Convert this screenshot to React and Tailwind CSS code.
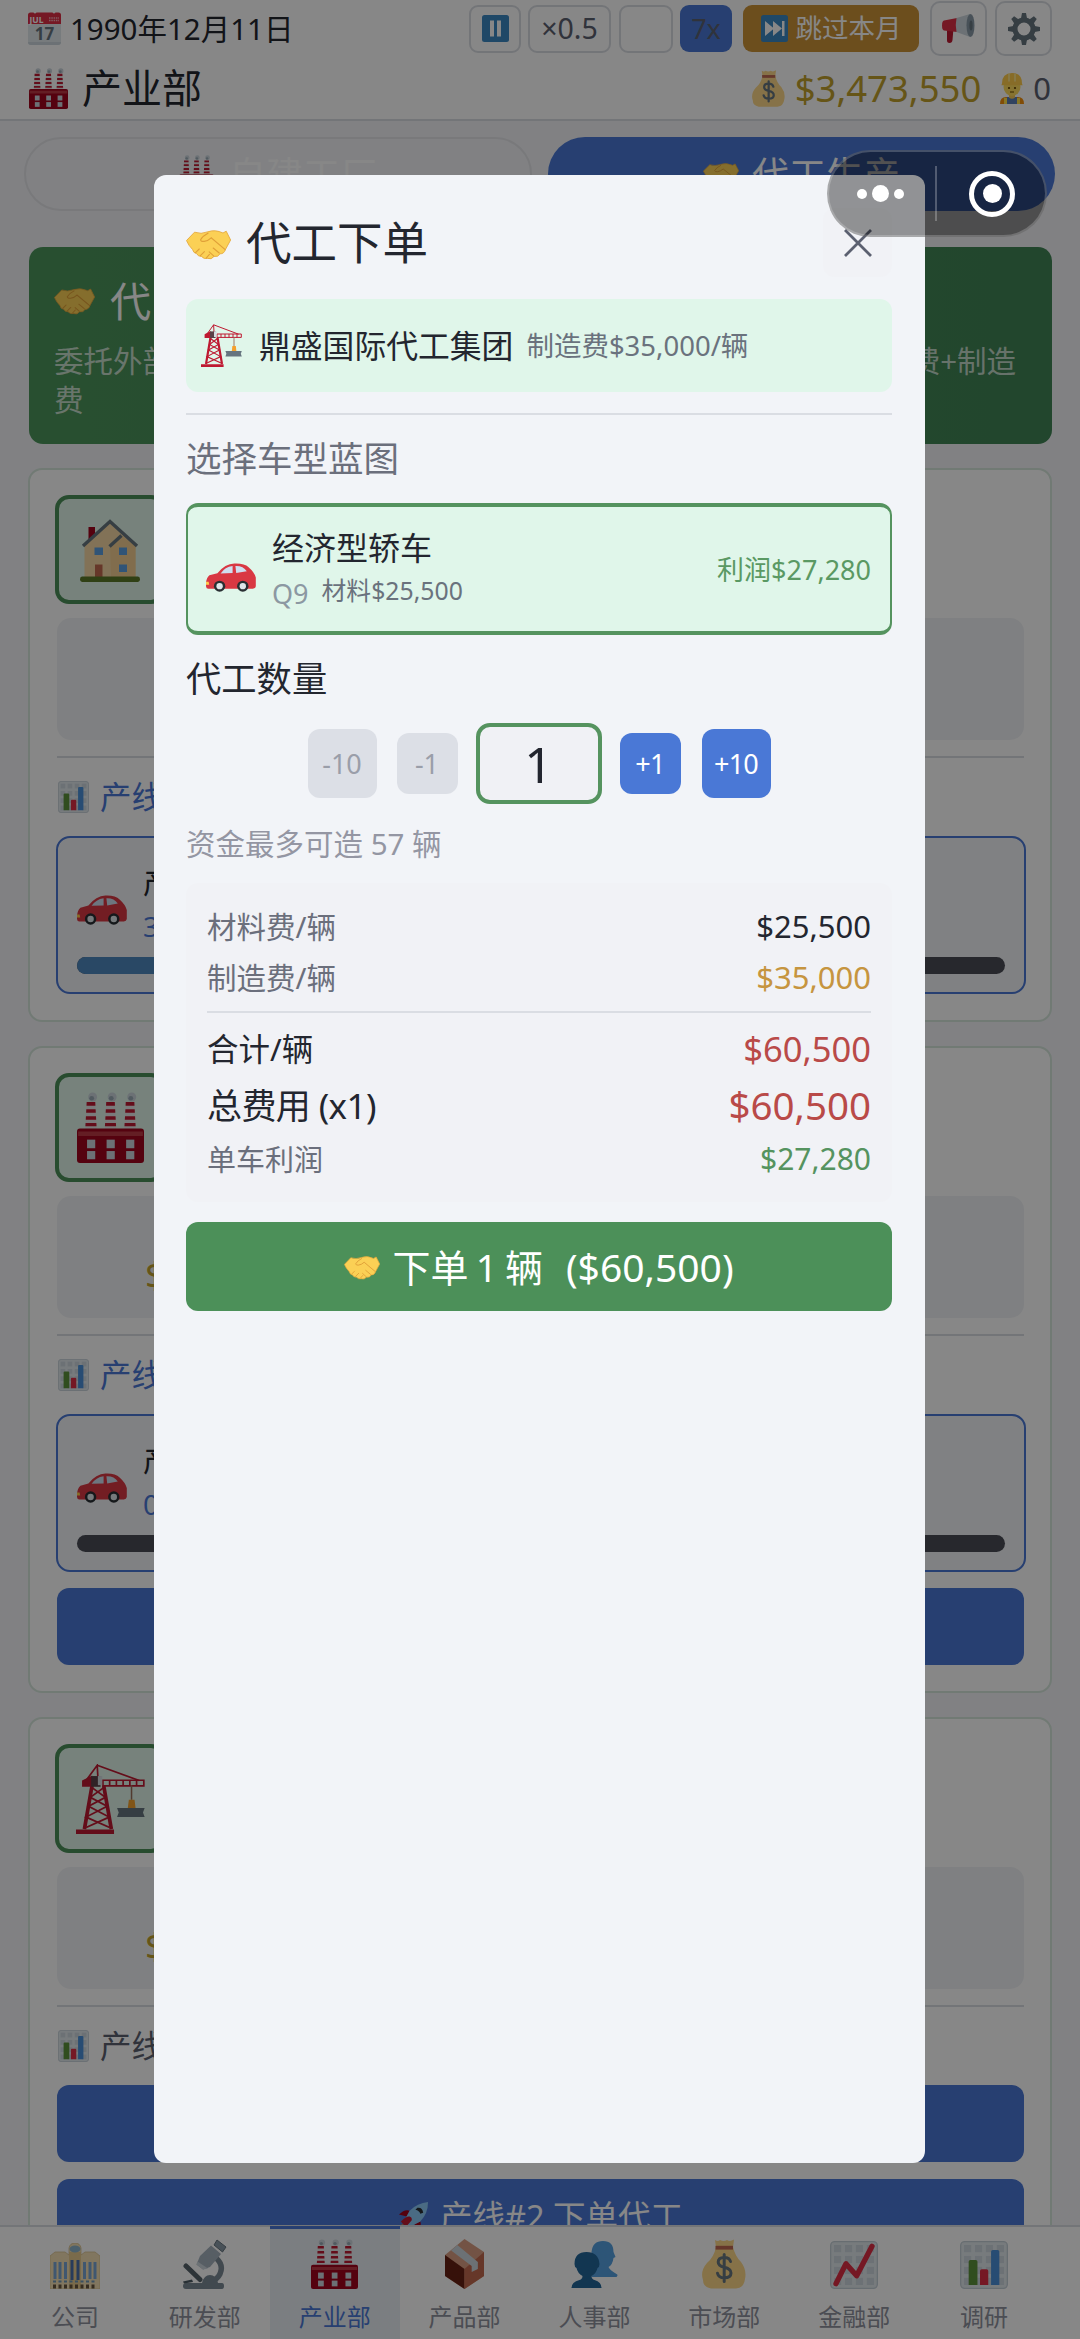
import React from "react";

/* ---------- emoji-style artwork ---------- */

function Factory({ className }) {
  return (
    <svg viewBox="0 0 36 38" preserveAspectRatio="none" className={className}>
      {[7.5, 18, 28.5].map((x) => (
        <g key={x}>
          <ellipse cx={x + 0.9} cy="2.7" rx="2.4" ry="2.4" fill="#ccd6dd" />
          <ellipse cx={x + 0.4} cy="3.4" rx="1.3" ry="1.2" fill="#99aab5" />
          <path d={`M${x - 2.3} 5.4h4.6l.8 14.6h-6.2z`} fill="#e6e7e8" />
          <path d={`M${x - 2.3} 5.4h4.6l.1 1.9h-4.8zM${x - 2.5} 9.2h5l.1 1.9h-5.2zM${x - 2.7} 13h5.4l.1 1.9h-5.6zM${x - 2.9} 16.6h5.8l.1 1.7h-6z`} fill="#be1931" />
        </g>
      ))}
      <rect x="0" y="19.5" width="36" height="18.5" rx="1.6" fill="#a0041e" />
      <path d="M.6 21.2h34.8v2.4H.6z" fill="#be3a45" />
      {[5.4, 15.9, 26.4].map((x) => (
        <g key={x} fill="#ccd6dd">
          <rect x={x} y="25.5" width="4.4" height="4.6" />
          <rect x={x} y="31.6" width="4.4" height="4.4" />
        </g>
      ))}
    </svg>
  );
}

function Handshake({ className }) {
  return (
    <svg viewBox="0 0 45 30" preserveAspectRatio="none" className={className}>
      <path d="M.5 10.5 8.5 2.2Q15 4.6 22 1.8 29-.8 37 3l3.2-1.8L44.6 10l-5.2 9.6Q38 24 34 23.8 32 27.4 28 26.4 25.5 30 21.6 28.4 18 29.4 15.4 26.4 12 26.6 10.6 23.6 7.4 23.2 6.6 19.6 2.6 15.6.5 10.5z" fill="#fbd055" stroke="#e5a93c" strokeWidth=".9" strokeLinejoin="round" />
      <path d="M22 3.2Q16.8 5.8 14.6 9.8q.2 2 3.6 1.6 4.2-.8 7-3.6L39.2 19.6" fill="none" stroke="#e0a038" strokeWidth="1.2" strokeLinecap="round" />
      <path d="M9.6 22.6l3.6-3.6M14.4 25.6l4-4M20.4 27.8l3-3.4M27.6 25.8l-4.4-4M33.2 23l-6-5" fill="none" stroke="#e0a038" strokeWidth="1.1" strokeLinecap="round" />
    </svg>
  );
}

function Crane({ className }) {
  return (
    <svg viewBox="0 0 41 43" preserveAspectRatio="none" className={className}>
      <g fill="none" stroke="#be1931">
        <path d="M9.5 13.5 5 40M16.5 13.5 21 40" strokeWidth="2.2" />
        <path d="M9.5 14.5l8 6-10 5.5 12.2 6.6L6 39M16.5 14.5l-8 6 10 5.5L6 32.6 20 39" strokeWidth="1.1" />
        <path d="M5 11.5 12.6.8 13 8M12.6.8l25 9.4" strokeWidth="1" />
        <path d="M16 10h24.3v3.4H16zM20 10v3.4M24 10v3.4M28 10v3.4M32 10v3.4M36 10v3.4" strokeWidth="1" />
      </g>
      <path d="M0 40.2h22.6V43H0zM3.6 10.2 9.6 7v7H3.6z" fill="#be1931" />
      <path d="M9 7.4h5.6V14H9z" fill="#5b4148" />
      <path d="M13 7.4h2.6V13H13z" fill="#d5dde2" />
      <path d="M33 13v9" stroke="#99705a" strokeWidth=".9" />
      <path d="M31.4 22h3.4l.6 5h-4.6z" fill="#f4a02c" />
      <path d="M24.4 27h16.4l-1 2.8 1 2.8H24.4l1-2.8z" fill="#66757f" />
    </svg>
  );
}

function Car({ className }) {
  return (
    <svg viewBox="0 0 50 30" preserveAspectRatio="none" className={className}>
      <path d="M0 24q-.4-8 3.4-11.2l8-2.2Q19 1 28.4.6q10-.4 14.2 3.8Q48.600 9.800 49.800 15v9q-.4 2.400-3 2.600H2.400Q.2 26.600 0 24z" fill="#d93843" />
      <path d="M14.600 10.800q4.400-6.600 12-7.600v7.200zM29.400 3.200q7.600-.4 11.400 5.400l-10.600 1.800z" fill="#cfdff0" />
      <path d="M0 19.500h2.600l.6 3H0z" fill="#ffcc4d" />
      {[13.6, 36.8].map((x) => (
        <g key={x}>
          <circle cx={x} cy="24" r="5.700" fill="#292f33" />
          <circle cx={x} cy="24" r="3.200" fill="#dfe6ea" />
        </g>
      ))}
    </svg>
  );
}

function House({ className }) {
  return (
    <svg viewBox="0 0 60 64" preserveAspectRatio="none" className={className}>
      <path d="M8.500 9h6.500v12H8.500z" fill="#a0041e" />
      <path d="M4.500 27 30 4l25.500 23v33h-51z" fill="#f5d8a4" />
      <path d="M30 28 42 18l13.500 10v32H31z" fill="#f3cf92" />
      <path d="M3 28 30 3.500 57 28M29.500 28.500 41.500 17.500" fill="none" stroke="#66757f" strokeWidth="3.400" />
      <path d="M15 46.500h7.500V60H15z" fill="#c1694f" />
      <path d="M14.500 29.500H23V37h-8.500zM39 29.500h8V37h-8zM39 46.500h8V54h-8z" fill="#5c9fe0" />
      <path d="M2 58.500h56q2 0 2 2.700t-2 2.700H2q-2 0-2-2.700t2-2.700z" fill="#5c7a28" />
    </svg>
  );
}

function ChartFrame() {
  return (
    <>
      <rect x=".5" y=".5" width="35" height="35" rx="3" fill="#e1e8ed" stroke="#c3ced6" />
      {[3, 11.2, 19.400, 27.600].map((y) =>
        [3, 11.200, 19.400, 27.600].map((x) => (
          <rect key={`${x}-${y}`} x={x} y={y} width="5.400" height="5.400" fill="#ccd6dd" />
        ))
      )}
    </>
  );
}

function BarChart({ className }) {
  return (
    <svg viewBox="0 0 36 36" preserveAspectRatio="none" className={className}>
      <ChartFrame />
      <path d="M6.500 15.500q0-1.300 1.300-1.300h4q1.300 0 1.300 1.300V33H6.500z" fill="#5c913b" />
      <path d="M15 22.500q0-1.300 1.300-1.300h3.600q1.300 0 1.300 1.300V33H15z" fill="#dd2e44" />
      <path d="M23.300 8q0-1.300 1.300-1.300h3.600Q29.500 6.700 29.500 8v25h-6.200z" fill="#4a90d9" />
    </svg>
  );
}

function LineChart({ className }) {
  return (
    <svg viewBox="0 0 36 36" preserveAspectRatio="none" className={className}>
      <ChartFrame />
      <path d="M4.500 32 12 17l8 9L31.500 4" fill="none" stroke="#dd2e44" strokeWidth="4" strokeLinecap="round" strokeLinejoin="round" />
    </svg>
  );
}

function MoneyBag({ className }) {
  return (
    <svg viewBox="0 0 44 50" preserveAspectRatio="none" className={className}>
      <path d="M13 1q3 2 5 0 4 2 7 0 3 2 7-.5L31 8.500H14z" fill="#fdd888" />
      <path d="M14 8h17q2 9 8 15 6 8 4 17 -1 9-9 9.500H9Q1 48 1 41-2 32 5 24q7-6 9-16z" fill="#fdd888" />
      <path d="M13.500 6.800h17.500v3.800H13.500z" fill="#bf6952" />
      <path d="M28.500 22.500q-1-4-6.300-4-6 0-6 4.500 0 4 6 5.300 6.800 1.500 6.800 5.700 0 4.800-6.800 4.800-5.700 0-6.700-4.600M22.200 15.500v27" fill="none" stroke="#67757f" strokeWidth="3" strokeLinecap="round" />
    </svg>
  );
}

function Calendar({ className }) {
  return (
    <svg viewBox="0 0 33 33" className={className}>
      <rect x="0" y="8" width="33" height="25" rx="3" fill="#e1e8ed" />
      <path d="M0 30h33q0 3-3 3H3q-3 0-3-3z" fill="#ccd6dd" />
      <path d="M0 3q0-2.500 2.500-2.500h3q1.500 2 3 0h16q1.500 2 3 0h3Q33 .5 33 3v9H0z" fill="#dd2e44" />
      <text x="1.500" y="10.500" fontFamily="Noto Sans, sans-serif" fontWeight="700" fontSize="8.500" fill="#fff">JUL</text>
      <path d="M21 6h10M21 8.500h10" stroke="#f4abb6" strokeWidth="1.300" strokeDasharray="1.500 .8" />
      <text x="16.500" y="28" textAnchor="middle" fontFamily="Noto Sans, sans-serif" fontWeight="700" fontSize="17" fill="#66757f">17</text>
    </svg>
  );
}

function Worker({ className }) {
  return (
    <svg viewBox="0 0 24 31" preserveAspectRatio="none" className={className}>
      <path d="M0 31q0-7 6-7h12q6 0 6 7z" fill="#f4900c" />
      <path d="M7 24h10v7H7z" fill="#5b7fb5" />
      <path d="M4 25h3v6H4zM17 25h3v6h-3z" fill="#ffe04a" />
      <path d="M9 20h6v4.500q-3 2.500-6 0z" fill="#f9ca55" />
      <ellipse cx="12" cy="14" rx="8.500" ry="9" fill="#ffdc5d" />
      <path d="M2 10.500Q2 0 12 0t10 10.500l.6 1.800H1.400z" fill="#ffcc4d" />
      <path d="M9 .6v8M15 .6v8" stroke="#fff0a8" strokeWidth="1.200" />
      <circle cx="9" cy="15" r="1.100" fill="#664500" />
      <circle cx="15" cy="15" r="1.100" fill="#664500" />
      <path d="M10 19h4" stroke="#664500" strokeWidth="1" />
    </svg>
  );
}

function Megaphone({ className }) {
  return (
    <svg viewBox="0 0 33 29" className={className}>
      <path d="M5 14h6.500l-1 12q-.3 3-3 3T5 26z" fill="#be1931" />
      <path d="M2 6.500 15 4v14L2 16.500Q0 16 0 11.500t2-5z" fill="#dd2e44" />
      <path d="M14.500 4 28 0q4 10 0 23l-13.500-5q-1.500-7 0-14z" fill="#ccd6dd" />
      <ellipse cx="28.500" cy="11.500" rx="4" ry="11.500" fill="#8899a6" />
      <ellipse cx="29" cy="11.500" rx="1.600" ry="5" fill="#66757f" />
    </svg>
  );
}

function Gear({ className }) {
  return (
    <svg viewBox="-16 -16 32 32" className={className}>
      <circle r="9" fill="none" stroke="#66757f" strokeWidth="5" />
      {[0, 45, 90, 135, 180, 225, 270, 315].map((a) => (
        <path key={a} d="M-3-10.500-2-16h4l1 5.500z" fill="#66757f" transform={`rotate(${a})`} />
      ))}
    </svg>
  );
}

function Office({ className }) {
  return (
    <svg viewBox="0 0 50 46" preserveAspectRatio="none" className={className}>
      <path d="M0 13 5 9h10l4 3V5q1-5 6-5t6 5v7l4-3h10l5 4v33H0z" fill="#f3dfb4" stroke="#d9c08d" strokeWidth=".8" />
      <path d="M19 9h12v37H19z" fill="#e6cb8e" />
      <ellipse cx="25" cy="6" rx="5.500" ry="3.500" fill="#8fb5cc" />
      <path d="M5 19v17M10 19v17M15.500 19v17M34.500 19v17M40 19v17M45 19v17" stroke="#7aa5d4" strokeWidth="3" />
      <path d="M22 17v20M28 17v20" stroke="#4a70ad" strokeWidth="3" />
      <path d="M3 43.500h44" stroke="#66563f" strokeWidth="4" strokeDasharray="3 2.500" />
      <path d="M3 38.500h44" stroke="#6f97b8" strokeWidth="1.800" strokeDasharray="3 2.500" />
    </svg>
  );
}

function Microscope({ className }) {
  return (
    <svg viewBox="0 0 44 50" className={className}>
      <path d="M33 19q8 7 4 16-3 6-10 8" fill="none" stroke="#7b8a95" strokeWidth="5.500" />
      <path d="M3 44h16q2-8 8-8t8 8h4q2 0 2 3t-2 3H3q-3 0-3-3t3-3z" fill="#7b8a95" />
      <path d="M0 42.500 9 40.500l1 2.500-9 1.500z" fill="#4d5b64" />
      <path d="M3 27 17 40.500" stroke="#56626b" strokeWidth="5" strokeLinecap="round" />
      <path d="M17 17 28 6.500 38 15 27 28 20 30.500 13.500 25.500z" fill="#a5b1bd" />
      <path d="M14.500 22.500 25 29.500 20 30.500 13.500 25.500z" fill="#ccd6dd" />
      <path d="M31 6 34 1l9 7-3.500 5z" fill="#8899a6" stroke="#66757f" />
    </svg>
  );
}

function Box({ className }) {
  return (
    <svg viewBox="0 0 38 50" preserveAspectRatio="none" className={className}>
      <path d="M19 0 38 13v24L19 50 0 37V16z" fill="#d99e82" />
      <path d="M0 16 19 30v20L0 37z" fill="#662113" />
      <path d="M19 30 38 13v24L19 50z" fill="#c1694f" />
      <path d="M6 11.500 12 6l20 17v7l-6 3v-6z" fill="#ccd6dd" />
    </svg>
  );
}

function People({ className }) {
  return (
    <svg viewBox="0 0 46 48" className={className}>
      <path d="M20 36V26q3-2 4-4-4-5-4-11Q21 0 31.500 0T42 11l2 5-2 1q-1 7-5 9 1 3 8 7 2 1 0 3z" fill="#55a0e0" />
      <path d="M0 47q0-6 8-8 3-1 3-4-5-3-6-8-2-1-2-4Q3 11 15 11t13 12q0 3-2 4-1 5-6 8 0 3 3 4 7 2 7 8z" fill="#226699" />
    </svg>
  );
}

function Rocket({ className }) {
  return (
    <svg viewBox="0 0 32 32" className={className}>
      <path d="M1 13q6-6 11-4l-3 6zM19 31q6-6 4-11l-6 3z" fill="#a0041e" />
      <path d="M0 32q0-8 5-9l4 4q-1 5-9 5z" fill="#f4900c" />
      <path d="M31 0Q20 1 12 9L6 20l6 6 11-6Q31 12 31 0z" fill="#8ccaf7" />
      <path d="M20 6q5-1 6 5l-3 1q-1-3-5-4z" fill="#292f33" />
      <path d="M3 20q6-6 9-5t2 4l-6 7z" fill="#be1931" />
    </svg>
  );
}

/* ---------- page behind the dialog ---------- */

function Header() {
  return (
    <header className="h-[121px] shrink-0 border-b-2 border-[#dadde3] bg-white">
      <div className="flex h-[57px] items-center pr-[28px] pl-[28px]">
        <Calendar className="h-[33px] w-[33px]" />
        <span className="ml-[9px] text-[29.500px] leading-none text-[#23262f]">1990年12月11日</span>
        <div className="ml-auto flex items-center text-[27px] leading-none">
          <span className="flex h-[48px] w-[52px] items-center justify-center rounded-[9px] border-2 border-[#dadde3]">
            <svg viewBox="0 0 27 27" className="h-[27px] w-[27px]">
              <rect width="27" height="27" rx="2.500" fill="#3b88c3" />
              <path d="M8 5.500h4v16H8zM15 5.500h4v16h-4z" fill="#fff" />
            </svg>
          </span>
          <span className="ml-[7px] flex h-[48px] w-[83px] items-center justify-center rounded-[9px] border-2 border-[#dadde3] text-[28.500px] text-[#5b6070]">×0.5</span>
          <span className="ml-[8px] h-[48px] w-[54px] rounded-[9px] border-2 border-[#dadde3]" />
          <span className="ml-[7px] flex h-[47px] w-[52px] items-center justify-center rounded-[9px] bg-[#4a78d6] text-[#5b6070]">7x</span>
          <span className="ml-[11px] flex h-[47px] w-[176px] items-center justify-center gap-[8px] rounded-[9px] bg-[#cc9338] text-[26.500px] whitespace-nowrap text-white">
            <svg viewBox="0 0 27 27" className="h-[27px] w-[27px]">
              <rect width="27" height="27" rx="2.500" fill="#3b88c3" />
              <path d="M4 6l9 7.500L4 21zM12 6l9 7.500L12 21zM21 6h2.500v15H21z" fill="#fff" />
            </svg>
            跳过本月
          </span>
          <span className="ml-[11px] flex h-[55px] w-[57px] items-center justify-center rounded-[10px] border-2 border-[#dadde3]">
            <Megaphone className="h-[29px] w-[33px]" />
          </span>
          <span className="ml-[8px] flex h-[55px] w-[57px] items-center justify-center rounded-[10px] border-2 border-[#dadde3]">
            <Gear className="h-[32px] w-[32px]" />
          </span>
        </div>
      </div>
      <div className="flex h-[62px] items-center pr-[29px] pl-[29px] leading-none">
        <Factory className="h-[41px] w-[39px]" />
        <span className="ml-[14px] text-[40px] text-[#23262f]">产业部</span>
        <MoneyBag className="ml-auto h-[37px] w-[33px]" />
        <span className="ml-[10px] text-[36.500px] text-[#c0a02c]">$3,473,550</span>
        <Worker className="ml-[19px] h-[31px] w-[24px]" />
        <span className="ml-[9px] text-[31px] text-[#5b6070]">0</span>
      </div>
    </header>
  );
}

function LineBox({ digit, filled }) {
  return (
    <div className="-mr-[2px] -ml-[1px] h-[158px] rounded-[14px] border-2 border-[#4a78d6] bg-[#f2f4f8] px-[19px]">
      <div className="flex h-[119px] items-start">
        <Car className="mt-[57px] h-[30px] w-[50px]" />
        <div className="ml-[16px] leading-none">
          <div className="mt-[22px] flex h-[44px] items-center text-[30px] text-[#23262f]">产</div>
          <div className="flex h-[44px] items-center text-[28px] text-[#4a78d6]">{digit}</div>
        </div>
      </div>
      <div className="h-[17px] overflow-hidden rounded-full bg-[#4a4c55]">
        {filled && <div className="h-full w-1/2 bg-[#4f88bf]" />}
      </div>
    </div>
  );
}

function PlantCard({ icon, price, muted, children }) {
  return (
    <section className="shrink-0 rounded-[14px] border-2 border-[#d6e6dc] bg-white pt-[25px] pr-[26px] pb-[26px] pl-[27px]">
      <div className="-ml-[2px] flex h-[109px] w-[110px] items-center justify-center rounded-[14px] border-4 border-[#4c9059] bg-[#e0f6ea]">
        {icon}
      </div>
      <div className="mt-[14px] flex h-[122px] items-center rounded-[14px] bg-[#f0f2f5] pl-[88px]">
        <span className="mt-[36px] text-[36px] leading-none text-[#c0a02c]">{price}</span>
      </div>
      <div className="mt-[16px] h-[2px] bg-[#dadde3]" />
      <div className="flex h-[78px] items-center">
        <BarChart className="ml-px h-[32px] w-[31px]" />
        <span className={muted ? "ml-[11px] text-[31.500px] leading-none text-[#5b6070]" : "ml-[11px] text-[31.500px] leading-none text-[#4a78d6]"}>产线</span>
      </div>
      {children}
    </section>
  );
}

function Background() {
  return (
    <main className="flex-1 overflow-hidden px-[28px] pt-[16px]">
      <div className="-mx-[4px] flex h-[74px] gap-[16px] pr-px text-[37px] leading-none">
        <div className="flex w-[508px] items-center justify-center gap-[15px] rounded-full border-2 border-[#e4e5e9]">
          <Factory className="h-[38px] w-[35px]" />
          <span className="text-white">自建工厂</span>
        </div>
        <div className="flex flex-1 items-center justify-center gap-[13px] rounded-full bg-[#4a78d6]">
          <Handshake className="h-[23px] w-[36px]" />
          <span className="text-white">代工生产</span>
        </div>
      </div>

      <div className="mt-[36px] ml-px h-[197px] rounded-[14px] bg-linear-to-r from-[#4d965c] to-[#408455] pt-[29px] pr-[36px] pl-[25px] text-[29.500px] leading-none text-white/70">
        <div className="flex h-[50px] items-center gap-[15px] text-[41px] text-white">
          <Handshake className="h-[27px] w-[41px]" />
          代
        </div>
        <div className="mt-[15px] flex h-[39px] items-center justify-between">
          <span>委托外部</span>
          <span>费+制造</span>
        </div>
        <div className="flex h-[39px] items-center">费</div>
      </div>

      <div className="mt-[24px] flex flex-col gap-[24px]">
        <PlantCard icon={<House className="h-[64px] w-[60px]" />}>
          <LineBox digit="3" filled />
        </PlantCard>
        <PlantCard icon={<Factory className="h-[71px] w-[67px]" />} price="$">
          <LineBox digit="0" />
          <div className="mt-[16px] h-[77px] rounded-[12px] bg-[#4a78d6]" />
        </PlantCard>
        <PlantCard icon={<Crane className="h-[70px] w-[69px]" />} price="$" muted>
          <div className="h-[77px] rounded-[12px] bg-[#4a78d6]" />
          <div className="mt-[17px] flex h-[77px] items-center justify-center gap-[11px] rounded-[12px] bg-[#4a78d6] text-[32.500px] leading-none text-white">
            <Rocket className="h-[31px] w-[31px]" />
            产线#2 下单代工
          </div>
        </PlantCard>
      </div>
    </main>
  );
}

const NAV = [
  ["公司", <Office className="h-[46px] w-[50px]" />],
  ["研发部", <Microscope className="h-[50px] w-[44px]" />],
  ["产业部", <Factory className="h-[50px] w-[47px]" />],
  ["产品部", <Box className="h-[50px] w-[39px]" />],
  ["人事部", <People className="h-[48px] w-[47px]" />],
  ["市场部", <MoneyBag className="h-[50px] w-[44px]" />],
  ["金融部", <LineChart className="h-[48px] w-[48px]" />],
  ["调研", <BarChart className="h-[48px] w-[48px]" />],
];

function BottomNav() {
  return (
    <nav className="flex h-[114px] shrink-0 border-t-2 border-[#dadde3] bg-white pr-[31px] pl-[10px] text-[24px] leading-none">
      {NAV.map(([label, icon]) => {
        const active = label === "产业部";
        return (
          <div
            key={label}
            className={
              active
                ? "-mt-px flex flex-1 flex-col items-center border-t-[3px] border-[#4a78d6] bg-[#e8eef3] pt-[10px] text-[#4a78d6]"
                : "flex flex-1 flex-col items-center pt-[12px] text-[#8f919d]"
            }
          >
            <div className="flex h-[50px] items-end">{icon}</div>
            <span className="mt-[16px]">{label}</span>
          </div>
        );
      })}
    </nav>
  );
}

/* ---------- order dialog ---------- */

function PriceRow({ label, value, rowClass, valueClass }) {
  return (
    <div className={"flex items-center justify-between " + rowClass}>
      <span>{label}</span>
      <span className={valueClass}>{value}</span>
    </div>
  );
}

function OrderDialog() {
  return (
    <div className="h-[1988px] w-[771px] rounded-[12px] bg-[#f2f4f8] pt-[33px] pr-[33px] pl-[32px] leading-none text-[#23262f]">
      <div className="flex h-[69px] items-center">
        <Handshake className="mt-[4px] h-[30px] w-[45px]" />
        <h1 className="ml-[15px] text-[45.500px]">代工下单</h1>
        <button className="ml-auto flex h-[69px] w-[69px] items-center justify-center rounded-[12px] bg-[#f1f2f6]">
          <svg viewBox="0 0 28 28" className="h-[28px] w-[28px]">
            <path d="M1 1l26 26M27 1 1 27" stroke="#5b6070" strokeWidth="2.800" />
          </svg>
        </button>
      </div>

      <div className="mt-[22px] flex h-[93px] items-center rounded-[12px] bg-[#e0f6ea] pl-[15px]">
        <Crane className="h-[43px] w-[41px]" />
        <span className="ml-[17px] text-[31.800px]">鼎盛国际代工集团</span>
        <span className="ml-[13px] text-[27.500px] text-[#6a727d]">制造费$35,000/辆</span>
      </div>
      <div className="mt-[21px] h-[2px] bg-[#dadde3]" />

      <div className="flex h-[88px] items-center text-[35.500px] text-[#6b6f7c]">选择车型蓝图</div>
      <div className="flex h-[132px] items-center rounded-[12px] border-x-2 border-y-4 border-[#55935f] bg-[#e0f6ea] pr-[19px] pl-[18px]">
        <Car className="mt-[17px] h-[29px] w-[50px]" />
        <div className="ml-[16px]">
          <div className="text-[32px]">经济型轿车</div>
          <div className="mt-[11px] flex items-center text-[24.800px] text-[#6a727d]">
            <span className="mt-[5px] text-[27px] text-[#8c98a2]">Q9</span>
            <span className="ml-[13px]">材料$25,500</span>
          </div>
        </div>
        <span className="ml-auto text-[27px] text-[#5a9963]">利润$27,280</span>
      </div>

      <div className="flex h-[88px] items-center text-[35.300px]">代工数量</div>
      <div className="flex h-[81px] items-center justify-center text-[27px] text-white">
        <button className="h-[69px] w-[69px] rounded-[12px] bg-[#dcdfe6] text-[#9a9ea9]">-10</button>
        <button className="ml-[20px] h-[61px] w-[61px] rounded-[12px] bg-[#dcdfe6] text-[#9a9ea9]">-1</button>
        <div className="ml-[18px] flex h-[81px] w-[126px] items-center justify-center rounded-[14px] border-4 border-[#55935f] bg-[#f0f1f5] text-[50px] text-[#23262f]">1</div>
        <button className="ml-[18px] h-[61px] w-[61px] rounded-[12px] bg-[#4a78d6] tracking-[-0.8px]">+1</button>
        <button className="ml-[21px] h-[69px] w-[69px] rounded-[12px] bg-[#4a78d6] tracking-[-0.8px]">+10</button>
      </div>
      <div className="flex h-[79px] items-center text-[29.500px] text-[#9496a3]">资金最多可造 57 辆</div>

      <div className="h-[319px] rounded-[12px] bg-[#f1f2f6] px-[21px] pt-[18px]">
        <PriceRow label="材料费/辆" value="$25,500" rowClass="h-[51px] text-[29.500px] text-[#6b6f7c]" valueClass="text-[31px] text-[#23262f]" />
        <PriceRow label="制造费/辆" value="$35,000" rowClass="h-[51px] text-[29.500px] text-[#6b6f7c]" valueClass="text-[31px] text-[#c6953f]" />
        <div className="mt-[8px] mb-[8px] h-[2px] bg-[#dadde3]" />
        <PriceRow label="合计/辆" value="$60,500" rowClass="h-[56px] text-[31.500px]" valueClass="text-[34.500px] text-[#b94a48]" />
        <PriceRow label="总费用 (x1)" value="$60,500" rowClass="h-[56px] text-[35px] tracking-[-0.6px]" valueClass="text-[38.500px] tracking-normal text-[#b94a48]" />
        <PriceRow label="单车利润" value="$27,280" rowClass="h-[52px] text-[29px] text-[#6b6f7c]" valueClass="text-[30px] text-[#55935f]" />
      </div>

      <button className="mt-[20px] flex h-[89px] w-full items-center justify-center rounded-[12px] bg-[#4c9059] text-[38px] text-white">
        <Handshake className="mt-[2px] h-[24px] w-[36px]" />
        <span className="ml-[12px] [word-spacing:-2.500px]">下单 1 辆</span>
        <span className="ml-[23px] text-[39px]">($60,500)</span>
      </button>
    </div>
  );
}

function SystemCapsule() {
  return (
    <div className="absolute top-[150px] left-[827px] flex h-[87px] w-[220px] items-center rounded-full border-2 border-white/20 bg-black/40">
      <div className="ml-[28px] flex items-center gap-[5px]">
        <i className="h-[10px] w-[10px] rounded-full bg-white" />
        <i className="h-[17px] w-[17px] rounded-full bg-white" />
        <i className="h-[10px] w-[10px] rounded-full bg-white" />
      </div>
      <i className="ml-[31px] h-[55px] w-[2px] bg-white/25" />
      <div className="ml-[32px] flex h-[46px] w-[46px] items-center justify-center rounded-full border-[5px] border-white">
        <i className="h-[19px] w-[19px] rounded-full bg-white" />
      </div>
    </div>
  );
}

export default function App() {
  return (
    <div className="relative flex h-[2339px] w-[1080px] flex-col overflow-hidden bg-[#f3f4f8] font-['Noto_Sans','Noto_Sans_CJK_SC',sans-serif]">
      <Header />
      <Background />
      <BottomNav />
      <div className="absolute inset-0 flex items-center justify-center bg-black/47 pr-px pb-px">
        <OrderDialog />
      </div>
      <SystemCapsule />
    </div>
  );
}
